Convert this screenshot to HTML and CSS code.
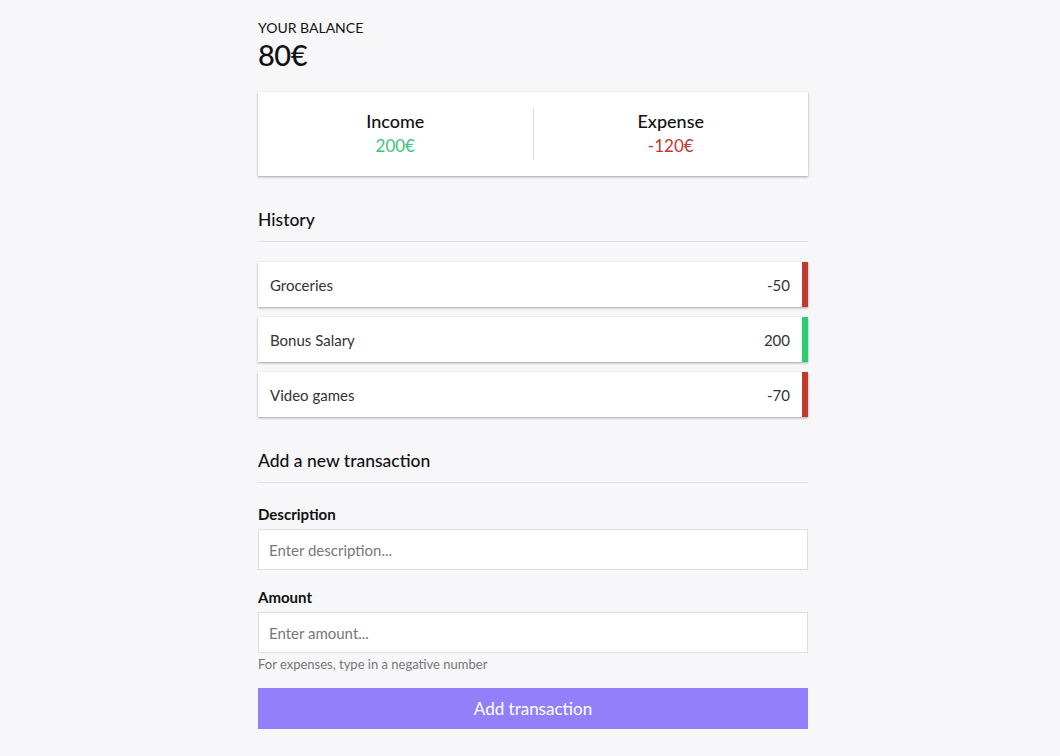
FILE: index.html
```html
<!DOCTYPE html>
<html lang="en">
<head>
<meta charset="utf-8">
<title>Expense Tracker</title>
<link rel="stylesheet" href="styles.css">
</head>
<body>
<main class="container">
  <h4 class="balance-label">YOUR BALANCE</h4>
  <h1 class="balance">80€</h1>

  <div class="inc-exp">
    <div class="inc-exp-col">
      <h4>Income</h4>
      <p class="money plus">200€</p>
    </div>
    <div class="inc-exp-col">
      <h4>Expense</h4>
      <p class="money minus">-120€</p>
    </div>
  </div>

  <h3 class="section-title">History</h3>
  <ul class="list">
    <li class="item minus">Groceries <span>-50</span></li>
    <li class="item plus">Bonus Salary <span>200</span></li>
    <li class="item minus">Video games <span>-70</span></li>
  </ul>

  <h3 class="section-title">Add a new transaction</h3>
  <form class="form">
    <div class="form-control">
      <label for="text">Description</label>
      <input type="text" id="text" placeholder="Enter description...">
    </div>
    <div class="form-control">
      <label for="amount">Amount</label>
      <input type="number" id="amount" placeholder="Enter amount...">
      <small>For expenses, type in a negative number</small>
    </div>
    <button type="button" class="btn">Add transaction</button>
  </form>
</main>
</body>
</html>
```
FILE: styles.css
```css
* { box-sizing: border-box; }

body {
  margin: 0;
  padding-left: 6px;
  background: #f7f6f9;
  font-family: Lato, "Noto Sans", sans-serif;
  color: #111;
}

.container {
  width: 550px;
  margin: 0 auto;
  padding-top: 18px;
}

.balance-label {
  margin: 0;
  font-size: 14px;
  font-weight: 400;
  line-height: 20px;
}

.balance {
  margin: 0;
  font-size: 29px;
  font-weight: 500;
  line-height: 34px;
  letter-spacing: -0.5px;
}

.inc-exp {
  margin-top: 20px;
  background: #fff;
  height: 84px;
  display: flex;
  align-items: center;
  box-shadow: 0 1px 3px rgba(0,0,0,0.12), 0 1px 2px rgba(0,0,0,0.24);
}

.inc-exp-col {
  flex: 1;
  text-align: center;
  height: 52px;
  padding-top: 1px;
}

.inc-exp-col:first-child {
  border-right: 1px solid #e2e2e2;
}

.inc-exp-col h4 {
  margin: 0;
  font-size: 18px;
  font-weight: 500;
  line-height: 24px;
}

.money {
  margin: 2px 0 0;
  font-size: 17px;
  line-height: 22px;
}

.money.plus { color: #3ec47a; }
.money.minus { color: #c0392b; }

.section-title {
  margin: 0;
  font-size: 17.5px;
  font-weight: 500;
  line-height: 24px;
  padding-bottom: 9px;
  border-bottom: 1px solid #e0dfe2;
}

.inc-exp + .section-title { margin-top: 32px; }

.list {
  list-style: none;
  padding: 0;
  margin: 20px 0 32px;
  display: flex;
  flex-direction: column;
  gap: 10px;
}

.item {
  background: #fff;
  height: 45px;
  display: flex;
  align-items: center;
  justify-content: space-between;
  padding: 0 12px;
  font-size: 15px;
  font-weight: 400;
  color: #333;
  box-shadow: 0 1px 3px rgba(0,0,0,0.12), 0 1px 2px rgba(0,0,0,0.24);
}

.item.minus { border-right: 6px solid #c0392b; }
.item.plus { border-right: 6px solid #2ecc71; }

.form { margin-top: 21px; }

.form-control { margin-bottom: 17px; }
.form-control:last-of-type { margin-bottom: 15px; }

.form-control label {
  display: block;
  font-size: 15px;
  font-weight: 700;
  line-height: 20px;
  margin-bottom: 5px;
}

.form-control input {
  display: block;
  width: 100%;
  height: 41px;
  border: 1px solid #dedede;
  background: #fff;
  padding: 0 10px;
  font-family: inherit;
  font-size: 15px;
  color: #333;
  outline: none;
}

.form-control input::placeholder { color: #777; font-weight: 400; }

.form-control small {
  display: block;
  font-size: 13px;
  color: #777;
  line-height: 18px;
  margin-top: 2px;
}

.btn {
  display: block;
  width: 100%;
  height: 41px;
  border: 0;
  background: #927ff9;
  color: #fff;
  font-family: inherit;
  font-size: 17px;
  cursor: pointer;
}
```
